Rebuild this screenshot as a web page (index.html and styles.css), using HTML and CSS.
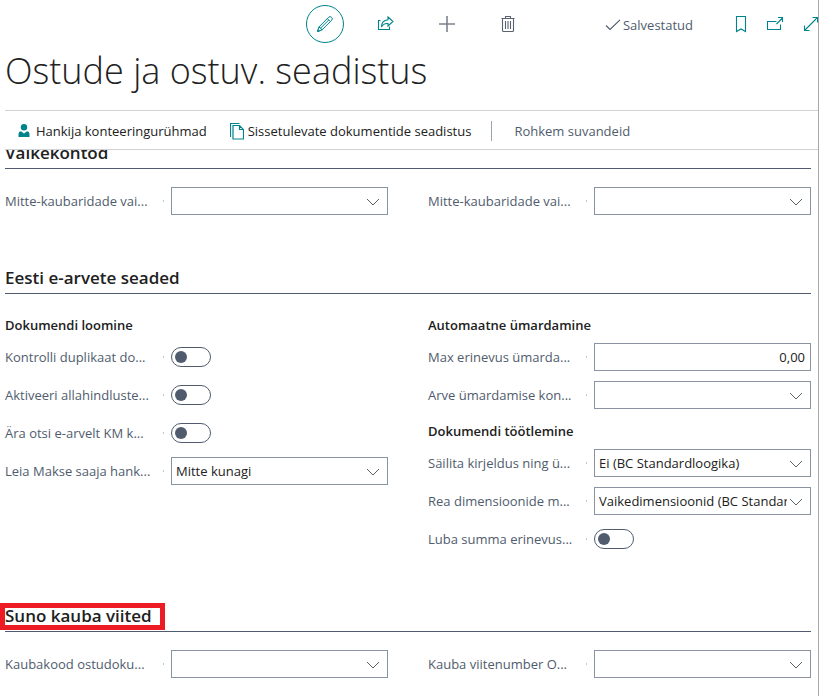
FILE: index.html
```
<!DOCTYPE html>
<html lang="et">
<head>
<meta charset="utf-8">
<title>Ostude ja ostuv. seadistus</title>
<link rel="stylesheet" href="styles.css">
</head>
<body>
<svg class="defs" aria-hidden="true">
  <symbol id="chevron" viewBox="0 0 14 8"><path d="M1 1l6 6 6-6" fill="none" stroke="#606060" stroke-width="1"/></symbol>
</svg>
<div class="page">
  <header class="top">
    <div class="tools">
      <button class="tool tool-active" type="button" aria-label="Redigeeri">
        <svg width="18" height="18" viewBox="0 0 18 18"><path d="M1.5 16.5l1.3-4.4L12.6 2.3q1.5-1.5 3 0t0 3L5.8 15.1zM2.8 12.1q2.3.4 3 3M11.3 3.6l3 3M4.4 13.3l8.2-8.2M1.5 16.5l.6-2 1.4 1.4z" stroke-width="1"/></svg>
      </button>
      <button class="tool" type="button" aria-label="Jaga">
        <svg width="18" height="18" viewBox="0 0 18 18"><path d="M3.500 5.500h-2v9h11v-3M11 2l5 4.500-5 4.500V8.500Q6.500 8 4.500 12 4.500 5.500 11 4.800z"/></svg>
      </button>
      <button class="tool tool-gray" type="button" aria-label="Uus">
        <svg width="18" height="18" viewBox="0 0 18 18"><path d="M9 1v16M1 9h16" stroke-width="1.600" opacity=".8"/></svg>
      </button>
      <button class="tool tool-gray" type="button" aria-label="Kustuta">
        <svg width="18" height="18" viewBox="0 0 18 18"><path d="M2.500 3.500h13M6.500 3.500v-2h5v2M3.500 3.500v12q0 1 1 1h9q1 0 1-1v-12M6.500 6v8M9 6v8M11.500 6v8"/></svg>
      </button>
    </div>
    <span class="status">
      <svg width="16" height="12" viewBox="0 0 16 12"><path d="M1 6.500l4 4L15 .8"/></svg>
      <span>Salvestatud</span>
    </span>
    <div class="views">
      <button class="view" type="button" aria-label="Järjehoidja">
        <svg width="12" height="17" viewBox="0 0 12 17"><path d="M1.500.5h9v15L6 13l-4.500 2.500z"/></svg>
      </button>
      <button class="view" type="button" aria-label="Ava uues aknas">
        <svg width="17" height="16" viewBox="0 0 17 16"><path d="M9.500 5.500h-9v8h13v-5M9.500 8l6-6M11 1.500h4.500V6"/></svg>
      </button>
      <button class="view" type="button" aria-label="Laienda">
        <svg width="16" height="16" viewBox="0 0 16 16"><path d="M1.500 14.500l13-13M9.500 1.500h5v5M1.500 9.500v5h5"/></svg>
      </button>
    </div>
  </header>
  <h1 class="title">Ostude ja ostuv. seadistus</h1>
  <nav class="actions">
    <a class="action" href="#">
      <svg class="person" width="12" height="14" viewBox="0 0 12 14"><circle cx="6" cy="3.300" r="3.200"/><path d="M.5 13V10q0-2.500 2.500-2.700L6 9.500l3-2.200q2.500.2 2.500 2.700v3z"/></svg>
      Hankija konteeringurühmad</a>
    <a class="action docs" href="#">
      <svg width="14" height="17" viewBox="0 0 14 17"><path d="M9.500.5h-9v13.500M3 2.500h6.500l4 4v9.500H3zM9.500 2.500v4h4" stroke-width="1.200"/></svg>
      Sissetulevate dokumentide seadistus</a>
    <a class="more" href="#">Rohkem suvandeid</a>
  </nav>
  <main class="content">
    <section>
      <h2>Vaikekontod</h2>
      <div class="columns">
        <div class="row"><label for="f1">Mitte-kaubaridade vai...</label><div class="drop"><select id="f1"><option></option></select><svg><use href="#chevron"/></svg></div></div>
        <div class="row"><label for="f2">Mitte-kaubaridade vai...</label><div class="drop"><select id="f2"><option></option></select><svg><use href="#chevron"/></svg></div></div>
      </div>
    </section>
    <section>
      <h2>Eesti e-arvete seaded</h2>
      <div class="columns">
        <div class="groups">
          <div class="group">
            <h3>Dokumendi loomine</h3>
            <div class="rows">
              <div class="row"><label for="f3">Kontrolli duplikaat do...</label><input class="toggle" type="checkbox" role="switch" id="f3"></div>
              <div class="row"><label for="f4">Aktiveeri allahindluste...</label><input class="toggle" type="checkbox" role="switch" id="f4"></div>
              <div class="row"><label for="f5">Ära otsi e-arvelt KM k...</label><input class="toggle" type="checkbox" role="switch" id="f5"></div>
              <div class="row"><label for="f6">Leia Makse saaja hank...</label><div class="drop"><select id="f6"><option>Mitte kunagi</option></select><svg><use href="#chevron"/></svg></div></div>
            </div>
          </div>
        </div>
        <div class="groups">
          <div class="group">
            <h3>Automaatne ümardamine</h3>
            <div class="rows">
              <div class="row"><label for="f7">Max erinevus ümarda...</label><input class="number" type="text" id="f7" value="0,00"></div>
              <div class="row"><label for="f8">Arve ümardamise kon...</label><div class="drop"><select id="f8"><option></option></select><svg><use href="#chevron"/></svg></div></div>
            </div>
          </div>
          <div class="group">
            <h3>Dokumendi töötlemine</h3>
            <div class="rows">
              <div class="row"><label for="f9">Säilita kirjeldus ning ü...</label><div class="drop"><select id="f9"><option>Ei (BC Standardloogika)</option></select><svg><use href="#chevron"/></svg></div></div>
              <div class="row"><label for="f10">Rea dimensioonide m...</label><div class="drop"><select id="f10"><option>Vaikedimensioonid (BC Standardloogika)</option></select><svg><use href="#chevron"/></svg></div></div>
              <div class="row"><label for="f11">Luba summa erinevus...</label><input class="toggle" type="checkbox" role="switch" id="f11"></div>
            </div>
          </div>
        </div>
      </div>
    </section>
    <section>
      <h2 class="marked">Suno kauba viited</h2>
      <div class="columns">
        <div class="row"><label for="f12">Kaubakood ostudoku...</label><div class="drop"><select id="f12"><option></option></select><svg><use href="#chevron"/></svg></div></div>
        <div class="row"><label for="f13">Kauba viitenumber O...</label><div class="drop"><select id="f13"><option></option></select><svg><use href="#chevron"/></svg></div></div>
      </div>
    </section>
  </main>
</div>
</body>
</html>
```
FILE: styles.css
```
*, *::before, *::after { box-sizing: border-box; }
body {
  margin: 0;
  background: #fff;
  color: #212121;
  font: 13px/20px "Open Sans", "Noto Sans", sans-serif;
}
.defs { position: absolute; width: 0; height: 0; }
.page {
  min-height: 100vh;
  border-right: 1px solid #a8a8a8;
  overflow: hidden;
}
svg { flex: none; fill: none; stroke: currentColor; stroke-width: 1.1; }
button { padding: 0; border: 0; background: none; font: inherit; }

.top {
  display: flex;
  justify-content: flex-end;
  align-items: center;
  height: 48px;
  margin-right: -10px;
}
.tools { display: flex; gap: 23px; }
.tool {
  display: grid;
  place-items: center;
  width: 38px;
  height: 38px;
  color: #00838a;
}
.tool-active { border: 1px solid #00838a; border-radius: 50%; }
.tool-gray { color: #5b6373; }
.status {
  display: flex;
  align-items: center;
  gap: 2px;
  margin: 2px 30px 0 78px;
  color: #505c6d;
}
.views { display: flex; }
.view {
  display: grid;
  place-items: center;
  width: 35px;
  height: 38px;
  color: #00838a;
}

.title {
  margin: 0 0 0 5px;
  height: 62px;
  font-size: 36px;
  font-weight: 300;
  line-height: 46px;
}

.actions {
  position: relative;
  z-index: 1;
  display: flex;
  align-items: center;
  height: 40px;
  margin-left: 5px;
  padding: 2px 0 0 13px;
  background: #fff;
  border-top: 1px solid #d0d3d6;
  border-bottom: 1px solid #d0d3d6;
}
.actions a { color: #212121; text-decoration: none; white-space: nowrap; }
.action { display: flex; align-items: center; gap: 6px; }
.docs { gap: 4px; margin-left: 23px; }
.action svg { color: #00838a; }
.action .person { fill: #00838a; stroke: none; }
.actions .more {
  margin-left: 20px;
  padding-left: 22px;
  border-left: 1px solid #9aa3b0;
  color: #505c6d;
}

.content {
  display: flex;
  flex-direction: column;
  gap: 47px;
  margin-top: -13px;
  padding: 0 7px 18px 5px;
}
h2 {
  position: relative;
  height: 32px;
  margin: 0 0 18px;
  border-bottom: 1px solid #505c6d;
  font-size: 17px;
  font-weight: 600;
  line-height: 32px;
}
.marked::after {
  content: "";
  position: absolute;
  left: -5px;
  top: 3px;
  width: 165px;
  height: 27px;
  border: 5px solid #ed1c24;
}
h3 {
  margin: 0 0 5px;
  font-size: 13px;
  font-weight: 600;
  line-height: 26px;
}
.columns { display: grid; grid-template-columns: 1fr 1fr; gap: 40px; }
.groups { display: flex; flex-direction: column; gap: 9px; }
.rows { display: flex; flex-direction: column; gap: 10px; }
.row {
  display: grid;
  grid-template-columns: 166fr 217fr;
  align-items: center;
  height: 28px;
}
.row label {
  display: flex;
  justify-content: space-between;
  align-items: center;
  padding-right: 7px;
  color: #505c6d;
  white-space: nowrap;
}
.row label::after {
  content: "";
  width: 1px;
  height: 2px;
  background: #c4c8ce;
}
.drop { display: grid; align-items: center; min-width: 0; }
.drop select, .drop svg { grid-area: 1 / 1; }
.drop svg {
  justify-self: end;
  width: 14px;
  height: 8px;
  margin: 2px 8px 0 0;
  pointer-events: none;
}
select, .number {
  width: 100%;
  min-width: 0;
  height: 28px;
  margin: 0;
  border: 1px solid #8a93a1;
  border-radius: 0;
  background: #fff;
  color: #212121;
  font: inherit;
}
select { appearance: none; padding: 0 23px 0 4px; }
.number { padding: 0 5px; text-align: right; }
.toggle {
  appearance: none;
  display: flex;
  align-items: center;
  width: 40px;
  height: 20px;
  margin: 0;
  padding-left: 3px;
  border: 1px solid #505c6d;
  border-radius: 10px;
}
.toggle::before {
  content: "";
  width: 12px;
  height: 12px;
  border-radius: 50%;
  background: #505c6d;
}
.toggle:checked { justify-content: flex-end; padding: 0 3px 0 0; }
```
